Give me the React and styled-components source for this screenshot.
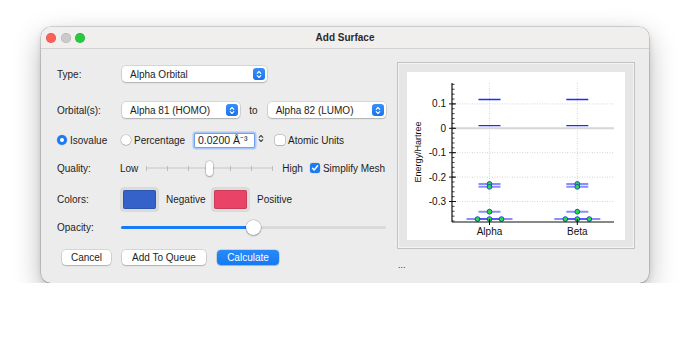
import styled, { createGlobalStyle } from "styled-components";

const GlobalStyle = createGlobalStyle`
  html, body {
    margin: 0;
    background: #ffffff;
  }
  body {
    font-family: "Liberation Sans", Arial, sans-serif;
    font-size: 10px;
    color: #1d1d1d;
  }
`;

const Page = styled.div`
  padding: 27px 0 0 41px;
`;

const Window = styled.div`
  width: 608px;
  height: 256px;
  box-sizing: border-box;
  border-radius: 10px;
  background: #ececec;
  overflow: hidden;
  box-shadow: 0 0 0 0.5px rgba(0, 0, 0, 0.25), 0 10px 28px rgba(0, 0, 0, 0.28),
    0 2px 6px rgba(0, 0, 0, 0.12);
  display: flex;
  flex-direction: column;
`;

const TitleBar = styled.div`
  position: relative;
  height: 21px;
  flex: none;
  display: flex;
  align-items: center;
  justify-content: center;
  background: #f1efee;
  border-bottom: 1px solid #d4d2d1;
  font-weight: bold;
  font-size: 10px;
  color: #2b2b2b;
`;

const Lights = styled.div`
  position: absolute;
  left: 5px;
  top: 6px;
  display: flex;
  gap: 4.5px;
`;

const Light = styled.span`
  width: 10px;
  height: 10px;
  border-radius: 50%;
  background: ${(p) => p.$color};
  box-shadow: inset 0 0 0 0.5px rgba(0, 0, 0, 0.15);
`;

const Body = styled.div`
  flex: 1;
  display: flex;
  padding: 0 14px 0 16px;
  gap: 11px;
`;

const LeftColumn = styled.div`
  width: 329px;
  display: flex;
  flex-direction: column;
  padding-top: 13px;
`;

const Row = styled.div`
  display: flex;
  align-items: center;
  height: ${(p) => p.$h || 24}px;
  margin-top: ${(p) => p.$mt || 0}px;
`;

const Label = styled.div`
  width: ${(p) => p.$w || 64}px;
  flex: none;
`;

const Select = styled.div`
  position: relative;
  box-sizing: border-box;
  width: ${(p) => p.$w}px;
  height: 16px;
  margin-left: 1px;
  padding-left: 8px;
  display: flex;
  align-items: center;
  background: #ffffff;
  border-radius: 4px;
  box-shadow: 0 0 0 0.5px rgba(0, 0, 0, 0.18), 0 1px 1.5px rgba(0, 0, 0, 0.18);
`;

const SelectBadge = styled.span`
  position: absolute;
  right: 2px;
  top: 2px;
  width: 12px;
  height: 12px;
  border-radius: 3px;
  background: linear-gradient(#3a8ff7, #1a74ec);
  display: flex;
  align-items: center;
  justify-content: center;
`;

const ToText = styled.span`
  margin: 0 9px 0 9px;
`;

const RadioItem = styled.div`
  width: ${(p) => p.$w}px;
  flex: none;
  display: flex;
  align-items: center;
  gap: 3px;
`;

const Radio = styled.span`
  width: 10px;
  height: 10px;
  box-sizing: border-box;
  border-radius: 50%;
  flex: none;
  background: ${(p) => (p.$on ? "#1a7cf5" : "#ffffff")};
  box-shadow: ${(p) =>
    p.$on
      ? "0 0 0 0.5px rgba(0,0,0,0.12)"
      : "0 0 0 0.5px rgba(0,0,0,0.25), 0 0.5px 1px rgba(0,0,0,0.15)"};
  display: flex;
  align-items: center;
  justify-content: center;
  &::after {
    content: "";
    display: ${(p) => (p.$on ? "block" : "none")};
    width: 4px;
    height: 4px;
    border-radius: 50%;
    background: #ffffff;
  }
`;

const NumberInput = styled.div`
  box-sizing: border-box;
  width: 61px;
  height: 15px;
  margin-left: 1px;
  padding-left: 3px;
  display: flex;
  align-items: center;
  background: #ffffff;
  border: 1px solid #6ea2ee;
  box-shadow: 0 0 0 1.5px #a9c8f6;
  border-radius: 2px;
  font-size: 10.5px;
`;

const Stepper = styled.span`
  width: 7px;
  height: 13px;
  margin-left: 2px;
  display: flex;
  flex-direction: column;
  justify-content: space-between;
  align-items: center;
`;

const Checkbox = styled.span`
  width: 10px;
  height: 10px;
  box-sizing: border-box;
  border-radius: 2.5px;
  flex: none;
  margin-left: ${(p) => p.$ml || 0}px;
  margin-right: 3px;
  background: ${(p) => (p.$on ? "#1a7cf5" : "#ffffff")};
  box-shadow: ${(p) =>
    p.$on
      ? "0 0 0 0.5px rgba(0,0,0,0.12)"
      : "0 0 0 0.5px rgba(0,0,0,0.28), 0 0.5px 1px rgba(0,0,0,0.12)"};
  display: flex;
  align-items: center;
  justify-content: center;
`;

const TickSlider = styled.div`
  position: relative;
  width: 127px;
  height: 16px;
  margin: 0 9px 0 8px;
  display: flex;
  align-items: center;
  justify-content: space-between;
  &::before {
    content: "";
    position: absolute;
    left: 0;
    right: 0;
    top: 7px;
    height: 2px;
    background: #d9d9d9;
    border-radius: 1px;
  }
`;

const Tick = styled.span`
  position: relative;
  width: 1px;
  height: 5px;
  background: #bdbdbd;
`;

const SliderThumb = styled.span`
  position: absolute;
  left: ${(p) => p.$left}px;
  top: ${(p) => p.$top}px;
  width: ${(p) => p.$w}px;
  height: ${(p) => p.$h}px;
  border-radius: ${(p) => p.$h / 2}px;
  background: #ffffff;
  box-shadow: 0 0 0 0.5px rgba(0, 0, 0, 0.22), 0 1px 2px rgba(0, 0, 0, 0.25);
`;

const Swatch = styled.div`
  box-sizing: border-box;
  width: 37px;
  height: 23px;
  border-radius: 3px;
  padding: 2px;
  background: #dcdcdc;
  box-shadow: 0 0 0 0.5px rgba(0, 0, 0, 0.15);
  margin-right: 8px;
  &::after {
    content: "";
    display: block;
    height: 100%;
    border-radius: 2px;
    background: ${(p) => p.$color};
    box-shadow: inset 0 0 0 0.5px rgba(0, 0, 0, 0.25);
  }
`;

const SwatchLabel = styled.span`
  width: ${(p) => p.$w}px;
`;

const OpacitySlider = styled.div`
  position: relative;
  width: 265px;
  height: 16px;
  &::before {
    content: "";
    position: absolute;
    left: 0;
    right: 0;
    top: 7px;
    height: 3px;
    border-radius: 1.5px;
    background: #d9d9d9;
  }
`;

const SliderFill = styled.span`
  position: absolute;
  left: 0;
  top: 7px;
  height: 3px;
  border-radius: 1.5px;
  background: #1a7cf5;
`;

const Buttons = styled.div`
  display: flex;
  align-items: center;
  gap: 11px;
  padding-left: 5px;
`;

const Button = styled.div`
  box-sizing: border-box;
  width: ${(p) => p.$w}px;
  height: 15px;
  display: flex;
  align-items: center;
  justify-content: center;
  border-radius: 4px;
  font-size: 10px;
  background: ${(p) =>
    p.$primary ? "linear-gradient(#2a89f8, #157af3)" : "#ffffff"};
  color: ${(p) => (p.$primary ? "#ffffff" : "#1d1d1d")};
  box-shadow: ${(p) =>
    p.$primary
      ? "0 0 0 0.5px rgba(0,60,160,0.3), 0 1px 1px rgba(0,0,0,0.15)"
      : "0 0 0 0.5px rgba(0,0,0,0.18), 0 1px 1.5px rgba(0,0,0,0.18)"};
`;

const RightColumn = styled.div`
  display: flex;
  flex-direction: column;
  padding-top: 13px;
`;

const ChartPanel = styled.div`
  box-sizing: border-box;
  width: 238px;
  height: 187px;
  padding: 9px;
  background: #e6e6e6;
  border: 1px solid #c2c2c2;
  box-shadow: inset 0 0 0 1px #f4f4f4;
`;

const ChartArea = styled.div`
  width: 218px;
  height: 168px;
  background: #ffffff;
`;

const Ellipsis = styled.div`
  margin-top: 11px;
  margin-left: 1px;
  font-size: 9px;
  color: #333;
`;

const Chevrons = ({ color = "#fff", w = 6 }) => (
  <svg width={w} height="9" viewBox="0 0 6 9">
    <path
      d="M1.2 3.3 L3 1.5 L4.8 3.3 M1.2 5.7 L3 7.5 L4.8 5.7"
      fill="none"
      stroke={color}
      strokeWidth="1.1"
      strokeLinecap="round"
      strokeLinejoin="round"
    />
  </svg>
);

const CheckMark = () => (
  <svg width="8" height="8" viewBox="0 0 8 8">
    <path
      d="M1.5 4.2 L3.2 6 L6.6 1.8"
      fill="none"
      stroke="#fff"
      strokeWidth="1.4"
      strokeLinecap="round"
      strokeLinejoin="round"
    />
  </svg>
);

// energy levels (Hartree) per spin; n = degeneracy drawn side by side
const levels = [
  { v: 0.118, occ: false, n: 1 },
  { v: 0.011, occ: false, n: 1 },
  { v: -0.228, occ: true, n: 1 },
  { v: -0.24, occ: true, n: 1 },
  { v: -0.342, occ: true, n: 1 },
  { v: -0.372, occ: true, n: 3 },
];

const yOf = (v) => 56.3 - v * 244;
const AX = 45;
const AXIS_TOP = 11;
const AXIS_BOTTOM = 150;
const AXIS_RIGHT = 207;
const columns = [
  { name: "Alpha", x: 82.5 },
  { name: "Beta", x: 170.3 },
];

function EnergyChart() {
  const minor = [];
  for (let i = -19; i <= 9; i++) minor.push(i * 0.02);
  const majors = [0.1, 0, -0.1, -0.2, -0.3];
  return (
    <svg width="218" height="168" viewBox="0 0 218 168">
      {/* grid */}
      {columns.map((c) => (
        <line
          key={c.name}
          x1={c.x}
          x2={c.x}
          y1={AXIS_TOP}
          y2={AXIS_BOTTOM}
          stroke="#c9c9c9"
          strokeWidth="0.8"
          strokeDasharray="1 1.5"
        />
      ))}
      {majors
        .filter((m) => m !== 0)
        .map((m) => (
          <line
            key={m}
            x1={AX}
            x2={AXIS_RIGHT}
            y1={yOf(m)}
            y2={yOf(m)}
            stroke="#c9c9c9"
            strokeWidth="0.8"
            strokeDasharray="1 1.5"
          />
        ))}
      <line
        x1={AX}
        x2={AXIS_RIGHT}
        y1={yOf(0)}
        y2={yOf(0)}
        stroke="#d6d6d6"
        strokeWidth="2"
      />

      {/* levels */}
      {columns.map((c) =>
        levels.map((l, li) => {
          const offs = l.n === 3 ? [-12, 0, 12] : [0];
          return (
            <g key={c.name + li}>
              {offs.map((o) => (
                <line
                  key={"l" + o}
                  x1={c.x + o - 11}
                  x2={c.x + o + 11}
                  y1={yOf(l.v)}
                  y2={yOf(l.v)}
                  stroke={l.occ ? "rgba(40,50,255,0.55)" : "#1f2bff"}
                  strokeWidth={l.occ ? 2 : 1.4}
                />
              ))}
              {l.occ &&
                offs.map((o) => (
                  <circle
                    key={"c" + o}
                    cx={c.x + o}
                    cy={yOf(l.v)}
                    r="2.4"
                    fill="#22e03a"
                    stroke="#2233dd"
                    strokeWidth="0.9"
                  />
                ))}
            </g>
          );
        })
      )}

      {/* axes */}
      <line x1={AX} x2={AX} y1={AXIS_TOP} y2={AXIS_BOTTOM} stroke="#111" strokeWidth="1.2" />
      <line x1={AX} x2={AXIS_RIGHT} y1={AXIS_BOTTOM} y2={AXIS_BOTTOM} stroke="#111" strokeWidth="1.2" />
      {minor
        .filter((v) => yOf(v) >= AXIS_TOP && yOf(v) <= AXIS_BOTTOM)
        .map((v) => (
          <line key={v} x1={AX} x2={AX + 2.5} y1={yOf(v)} y2={yOf(v)} stroke="#111" strokeWidth="0.8" />
        ))}
      {majors.map((m) => (
        <line key={"M" + m} x1={AX - 3} x2={AX + 4} y1={yOf(m)} y2={yOf(m)} stroke="#111" strokeWidth="1" />
      ))}
      {columns.map((c) => (
        <line key={"t" + c.name} x1={c.x} x2={c.x} y1={AXIS_BOTTOM - 3} y2={AXIS_BOTTOM + 3} stroke="#111" strokeWidth="1" />
      ))}

      {/* labels */}
      {majors.map((m) => (
        <text
          key={"T" + m}
          x={AX - 6}
          y={yOf(m) + 3.5}
          textAnchor="end"
          fontFamily="Liberation Sans, Arial, sans-serif"
          fontSize="10"
          fill="#111"
        >
          {m === 0 ? "0" : m.toFixed(1)}
        </text>
      ))}
      {columns.map((c) => (
        <text
          key={"X" + c.name}
          x={c.x}
          y={163}
          textAnchor="middle"
          fontFamily="Liberation Sans, Arial, sans-serif"
          fontSize="10"
          fill="#111"
        >
          {c.name}
        </text>
      ))}
      <text
        transform="translate(14 80) rotate(-90)"
        textAnchor="middle"
        fontFamily="Liberation Sans, Arial, sans-serif"
        fontSize="9"
        fill="#111"
      >
        Energy/Hartree
      </text>
    </svg>
  );
}

export default function App() {
  return (
    <>
      <GlobalStyle />
      <Page>
        <Window>
          <TitleBar>
            <Lights>
              <Light $color="#fe5f57" />
              <Light $color="#cacaca" />
              <Light $color="#2ac840" />
            </Lights>
            Add Surface
          </TitleBar>
          <Body>
            <LeftColumn>
              <Row>
                <Label>Type:</Label>
                <Select $w={145}>
                  Alpha Orbital
                  <SelectBadge>
                    <Chevrons />
                  </SelectBadge>
                </Select>
              </Row>
              <Row $mt={12}>
                <Label>Orbital(s):</Label>
                <Select $w={119}>
                  Alpha 81 (HOMO)
                  <SelectBadge>
                    <Chevrons />
                  </SelectBadge>
                </Select>
                <ToText>to</ToText>
                <Select $w={119}>
                  Alpha 82 (LUMO)
                  <SelectBadge>
                    <Chevrons />
                  </SelectBadge>
                </Select>
              </Row>
              <Row $mt={6}>
                <RadioItem $w={64}>
                  <Radio $on />
                  Isovalue
                </RadioItem>
                <RadioItem $w={72}>
                  <Radio />
                  Percentage
                </RadioItem>
                <NumberInput>0.0200 Å⁻³</NumberInput>
                <Stepper>
                  <Chevrons color="#444" w={6} />
                </Stepper>
                <Checkbox $ml={11} />
                Atomic Units
              </Row>
              <Row $mt={4}>
                <Label $w={63}>Quality:</Label>
                Low
                <TickSlider>
                  {Array.from({ length: 7 }).map((_, i) => (
                    <Tick key={i} />
                  ))}
                  <SliderThumb $left={60} $top={1} $w={7} $h={15} />
                </TickSlider>
                High
                <Checkbox $ml={7} $on>
                  <CheckMark />
                </Checkbox>
                Simplify Mesh
              </Row>
              <Row $mt={7} $h={25}>
                <Label>Colors:</Label>
                <Swatch $color="#3462c9" />
                <SwatchLabel $w={46}>Negative</SwatchLabel>
                <Swatch $color="#e94467" />
                <SwatchLabel>Positive</SwatchLabel>
              </Row>
              <Row $mt={3}>
                <Label>Opacity:</Label>
                <OpacitySlider>
                  <SliderFill style={{ width: 133 }} />
                  <SliderThumb $left={125} $top={1} $w={15} $h={15} />
                </OpacitySlider>
              </Row>
              <Row $mt={6}>
                <Buttons>
                  <Button $w={49}>Cancel</Button>
                  <Button $w={84}>Add To Queue</Button>
                  <Button $primary $w={62}>
                    Calculate
                  </Button>
                </Buttons>
              </Row>
            </LeftColumn>
            <RightColumn>
              <ChartPanel>
                <ChartArea>
                  <EnergyChart />
                </ChartArea>
              </ChartPanel>
              <Ellipsis>...</Ellipsis>
            </RightColumn>
          </Body>
        </Window>
      </Page>
    </>
  );
}
